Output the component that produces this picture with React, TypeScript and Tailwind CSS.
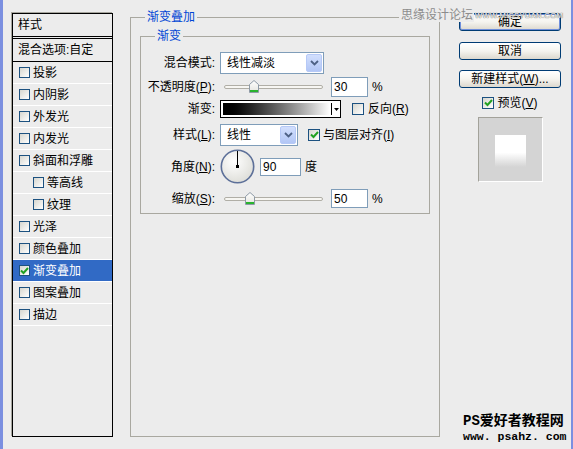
import type React from "react";

const effects = [
  { name: "投影" },
  { name: "内阴影" },
  { name: "外发光" },
  { name: "内发光" },
  { name: "斜面和浮雕" },
  { name: "等高线", sub: true },
  { name: "纹理", sub: true },
  { name: "光泽" },
  { name: "颜色叠加" },
  { name: "渐变叠加", on: true },
  { name: "图案叠加" },
  { name: "描边" },
];

const Box: React.FC<{ checked?: boolean; small?: boolean }> = ({ checked, small }) => (
  <span
    className={`flex shrink-0 items-center justify-center border border-[#1c5180] bg-gradient-to-br from-[#d6d6cf] to-white ${
      small ? "w-[11px] h-[11px]" : "w-[12px] h-[12px]"
    }`}
  >
    {checked && (
      <svg width="9" height="8" viewBox="0 0 9 8">
        <path d="M1 3.5 L3.5 6 L8 1" fill="none" stroke="#21a121" strokeWidth="2" />
      </svg>
    )}
  </span>
);

const U: React.FC<{ c: string }> = ({ c }) => <span className="underline underline-offset-[1px]">{c}</span>;

const Chevron = () => (
  <svg width="9" height="6" viewBox="0 0 9 6">
    <path d="M1 1 L4.5 4.5 L8 1" fill="none" stroke="#4d6185" strokeWidth="1.8" />
  </svg>
);

const DropButton = () => (
  <span className="flex h-[18px] w-[16px] items-center justify-center rounded-[2px] border border-[#b6c9f7] bg-gradient-to-b from-[#d2dffd] to-[#b2c6f5]">
    <Chevron />
  </span>
);

const Slider: React.FC<{ thumb: string }> = ({ thumb }) => (
  <div className="relative flex h-[20px] w-[107px] items-center">
    <div className="mx-[4px] h-[4px] flex-1 rounded-full border border-[#b0aea6] bg-[#f7f6f2]" />
    <svg className={`absolute top-[3px] ${thumb}`} width="10" height="13" viewBox="0 0 10 13">
      <defs>
        <linearGradient id="tg" x1="0" y1="0" x2="0" y2="1">
          <stop offset="0" stopColor="#ffffff" />
          <stop offset="1" stopColor="#e4e4de" />
        </linearGradient>
      </defs>
      <polygon points="0.5,4.5 5,0.5 9.5,4.5 9.5,12.5 0.5,12.5" fill="url(#tg)" stroke="#8e9aa6" />
      <rect x="1" y="10" width="8" height="2" fill="#29b32f" />
    </svg>
  </div>
);

const Field: React.FC<{ w: string; h: string; v: string }> = ({ w, h, v }) => (
  <div className={`flex items-center border border-[#7f9db9] bg-white pl-[2px] ${w} ${h}`}>{v}</div>
);

const Label: React.FC<{ children: React.ReactNode }> = ({ children }) => (
  <div className="w-[74px] shrink-0 text-right">{children}</div>
);

const Button: React.FC<{ children: React.ReactNode; main?: boolean; className?: string }> = ({
  children,
  main,
  className,
}) => (
  <div
    className={`flex h-[18px] w-[102px] items-center justify-center rounded-[3px] border border-[#003c74] bg-gradient-to-b from-white via-[#f5f4ef] to-[#dcd8ce] ${
      main ? "shadow-[inset_0_0_0_1px_#6f8fdc]" : ""
    } ${className ?? ""}`}
  >
    {children}
  </div>
);

export default function App() {
  return (
    <div className="relative h-[449px] w-[573px] overflow-hidden border-l-[3px] border-r-[2px] border-[#7b8fe0] bg-[#ececec] font-['Liberation_Sans','Noto_Sans_CJK_SC',sans-serif] text-[12px] leading-[14px] text-black">
      <div className="flex items-start pl-[9px] pt-[10px]">
        {/* effects list */}
        <div className="mt-[3px] flex h-[424px] w-[101px] shrink-0 flex-col border border-black shadow-[-1px_-1px_0_#a7a69e]">
          <div className="flex h-[23px] items-center border-b border-black pl-[5px]">样式</div>
          <div className="h-[2px] border-b border-black" />
          <div className="flex h-[23px] items-center border-b border-black pl-[5px]">混合选项:自定</div>
          {effects.map((e) => (
            <div
              key={e.name}
              className={`flex h-[22px] items-center gap-[3px] border-b border-white ${e.sub ? "pl-[20px]" : "pl-[6px]"} ${
                e.on ? "bg-[#316ac5] text-white" : ""
              }`}
            >
              <Box small checked={e.on} />
              <span>{e.name}</span>
            </div>
          ))}
        </div>

        {/* gradient overlay settings */}
        <fieldset className="ml-[17px] h-[427px] w-[310px] min-w-0 shrink-0 border border-[#a9a8a0] px-[9px]">
          <legend className="ml-[5px] px-[2px] leading-[14px] text-[#0046d5]">渐变叠加</legend>
          <fieldset className="mt-[5px] min-w-0 border border-[#a9a8a0] pb-[5px]">
            <legend className="ml-[14px] px-[2px] leading-[14px] text-[#0046d5]">渐变</legend>

            <div className="mt-[9px] flex h-[22px] items-center gap-[5px]">
              <Label>混合模式:</Label>
              <div className="flex h-[22px] w-[104px] items-center border border-[#7f9db9] bg-white pl-[6px] pr-[1px]">
                <span className="flex-1">线性减淡</span>
                <DropButton />
              </div>
            </div>

            <div className="mt-[3px] flex h-[20px] items-center">
              <Label>
                不透明度(<U c="P" />):
              </Label>
              <div className="ml-[5px]">
                <Slider thumb="left-[29px]" />
              </div>
              <div className="ml-[4px]">
                <Field w="w-[37px]" h="h-[20px]" v="30" />
              </div>
              <span className="ml-[4px]">%</span>
            </div>

            <div className="mt-[3px] flex h-[18px] items-center">
              <Label>渐变:</Label>
              <div className="ml-[5px] flex h-[18px] w-[121px] border border-black bg-white p-[2px] pr-0">
                <div className="flex-1 bg-gradient-to-r from-black to-white" />
                <div className="ml-[1px] flex w-[9px] items-center justify-center border-l border-black">
                  <svg width="5" height="3" viewBox="0 0 5 3">
                    <path d="M0 0 H5 L2.5 3 Z" fill="#000" />
                  </svg>
                </div>
              </div>
              <div className="ml-[11px] flex items-center gap-[4px]">
                <Box />
                <span>
                  反向(<U c="R" />)
                </span>
              </div>
            </div>

            <div className="mt-[6px] flex h-[22px] items-center">
              <Label>
                样式(<U c="L" />):
              </Label>
              <div className="ml-[5px] flex h-[22px] w-[78px] items-center border border-[#7f9db9] bg-white pl-[6px] pr-[1px]">
                <span className="flex-1">线性</span>
                <DropButton />
              </div>
              <div className="ml-[10px] flex items-center gap-[3px]">
                <Box checked />
                <span>
                  与图层对齐(<U c="I" />)
                </span>
              </div>
            </div>

            <div className="mt-[3px] flex h-[35px] items-center">
              <Label>
                角度(<U c="N" />):
              </Label>
              <svg className="ml-[5px]" width="35" height="35" viewBox="0 0 35 35">
                <defs>
                  <radialGradient id="dg" cx="0.4" cy="0.35" r="0.75">
                    <stop offset="0" stopColor="#ffffff" />
                    <stop offset="1" stopColor="#dadad4" />
                  </radialGradient>
                </defs>
                <circle cx="17.5" cy="17.5" r="16.2" fill="url(#dg)" stroke="#5d7099" strokeWidth="1.6" />
                <line x1="17.5" y1="17.5" x2="17.5" y2="2" stroke="#000" strokeWidth="1" />
                <rect x="16" y="16" width="3" height="3" fill="#000" />
              </svg>
              <div className="ml-[5px]">
                <Field w="w-[41px]" h="h-[18px]" v="90" />
              </div>
              <span className="ml-[4px]">度</span>
            </div>

            <div className="mt-[5px] flex h-[19px] items-center">
              <Label>
                缩放(<U c="S" />):
              </Label>
              <div className="ml-[5px]">
                <Slider thumb="left-[25px]" />
              </div>
              <div className="ml-[4px]">
                <Field w="w-[37px]" h="h-[19px]" v="50" />
              </div>
              <span className="ml-[4px]">%</span>
            </div>
          </fieldset>
        </fieldset>

        {/* buttons and preview */}
        <div className="ml-[19px] mt-[3px] flex w-[102px] shrink-0 flex-col items-center">
          <Button main className="items-end pb-[1px]">
            确定
          </Button>
          <Button className="mt-[11px]">取消</Button>
          <Button className="mt-[10px]">
            新建样式(<U c="W" />)...
          </Button>
          <div className="mt-[9px] flex h-[12px] items-center gap-[3px]">
            <Box checked />
            <span>
              预览(<U c="V" />)
            </span>
          </div>
          <div className="mt-[8px] flex h-[65px] w-[65px] justify-center border border-b-white border-l-[#a3a29a] border-r-white border-t-[#a3a29a] bg-[#d4d4d4] pt-[17px]">
            <div className="h-[32px] w-[31px] bg-gradient-to-b from-white from-55% to-[#d4d4d4]" />
          </div>
        </div>
      </div>

      {/* watermarks */}
      <div className="absolute left-[396px] top-[8px] bg-[#ececec] pl-[2px] pr-[1px] text-[12px] text-[#8c8c8c]">
        思缘设计论坛
      </div>
      <div className="absolute left-[472px] top-[11px] font-['Liberation_Sans',sans-serif] text-[7.5px] leading-[9px] tracking-[0.4px] text-white [text-shadow:0_0_1px_#555,0_0_1px_#555]">
        WWW.MISSYUAN.COM
      </div>
      <div className="absolute left-[460px] top-[413px] flex flex-col">
        <span className="font-['Liberation_Mono','Noto_Sans_CJK_SC',monospace] text-[14px] font-bold leading-[17px]">
          PS爱好者教程网
        </span>
        <span className="font-['Liberation_Mono',monospace] text-[11.5px] font-bold leading-[14px]">
          www. psahz. com
        </span>
      </div>
    </div>
  );
}
